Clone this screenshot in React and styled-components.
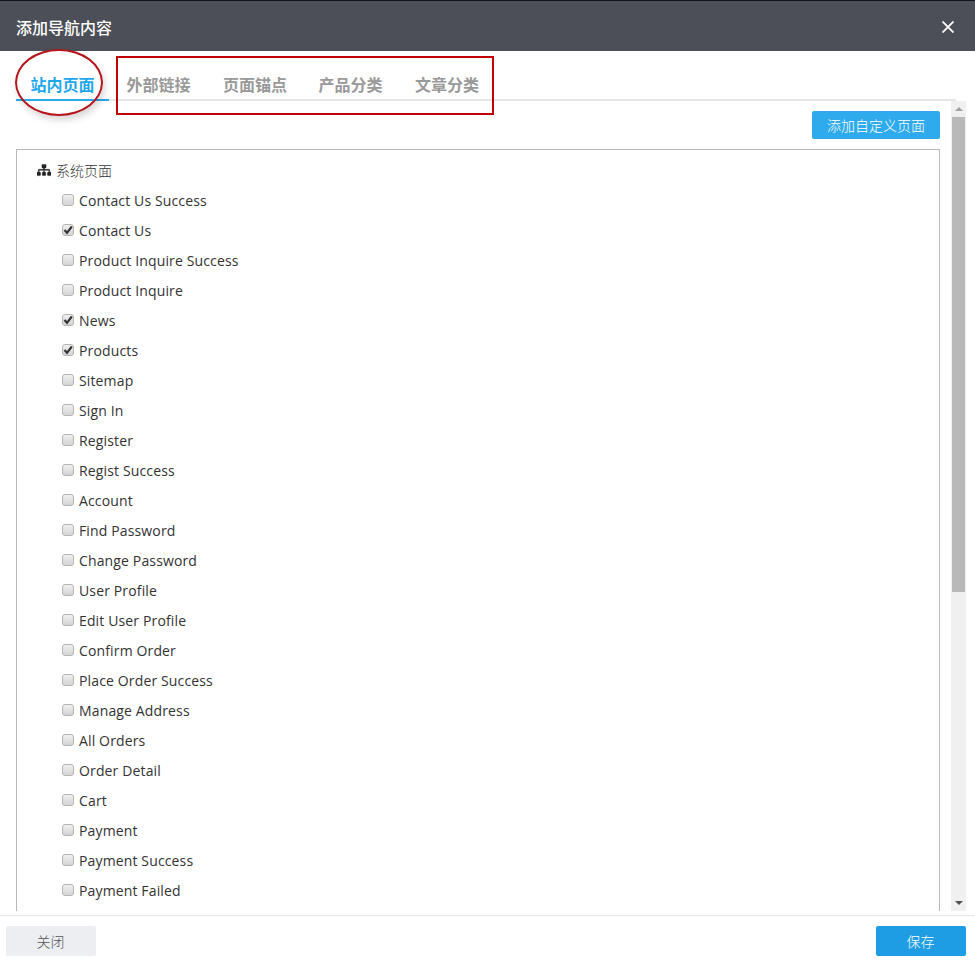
import React from 'react';
import styled, { createGlobalStyle } from 'styled-components';
import { FaSitemap } from 'react-icons/fa';

const GlobalStyle = createGlobalStyle`
    html, body {
        margin: 0;
        padding: 0;
        background: #fff;
    }

    body {
        font-family: "Open Sans", "Noto Sans CJK SC", sans-serif;
    }
`;

const Dialog = styled.div`
    position: relative;
    display: flex;
    flex-direction: column;
    width: 975px;
    height: 965px;
    overflow: hidden;
    background: #fff;
`;

const Header = styled.div`
    display: flex;
    align-items: center;
    justify-content: space-between;
    box-sizing: border-box;
    height: 51px;
    padding: 2px 21px 0 16px;
    background: #4c4f57;
    border-top: 1px solid #15161a;
`;

const Title = styled.div`
    color: #fff;
    font-family: "Noto Sans CJK SC", sans-serif;
    font-size: 16px;
    font-weight: 500;
`;

const CloseIcon = styled.svg`
    display: block;
    width: 12px;
    height: 12px;
    stroke: #fff;
    stroke-width: 1.8;
`;

const Tabs = styled.div`
    display: flex;
    box-sizing: border-box;
    height: 50px;
    margin: 0 19px 0 16px;
    border-bottom: 2px solid #e6e6e6;
`;

const Tab = styled.div`
    box-sizing: border-box;
    width: ${(p) => p.$width}px;
    height: 50px;
    padding-top: 22px;
    border-bottom: 2px solid ${(p) => (p.$active ? '#2aabe9' : 'transparent')};
    color: ${(p) => (p.$active ? '#1ea7ec' : '#999')};
    font-family: "Noto Sans CJK SC", sans-serif;
    font-size: 16px;
    font-weight: 700;
    line-height: 22px;
    text-align: center;
`;

const Body = styled.div`
    display: flex;
    flex: 1;
    min-height: 0;
    padding-left: 16px;
`;

const Content = styled.div`
    flex: none;
    width: 924px;
    overflow: hidden;
`;

const ActionRow = styled.div`
    display: flex;
    justify-content: flex-end;
    padding: 10px 0;
`;

const AddButton = styled.button`
    width: 128px;
    height: 28px;
    padding: 0;
    border: 0;
    border-radius: 2px;
    background: #2fabed;
    color: #fff;
    font-family: "Noto Sans CJK SC", sans-serif;
    font-size: 14px;
    font-weight: 300;
`;

const TreeBox = styled.div`
    box-sizing: border-box;
    height: 900px;
    padding: 10px 20px;
    border: 1px solid #b9b9b9;
`;

const TreeTitle = styled.div`
    display: flex;
    align-items: center;
    gap: 5px;
    height: 20px;
    margin-bottom: 5px;
    color: #333;
    font-family: "Noto Sans CJK SC", sans-serif;
    font-size: 14px;
    font-weight: 300;

    svg {
        width: 14px;
        height: 14px;
        color: #222;
        stroke: #222;
        stroke-width: 20px;
    }
`;

const Row = styled.div`
    display: flex;
    align-items: center;
    gap: 5px;
    height: 30px;
    padding-left: 25px;
    color: #333;
    font-size: 14px;
    letter-spacing: 0.14px;
`;

const Check = styled.span`
    display: flex;
    align-items: center;
    justify-content: center;
    box-sizing: border-box;
    width: 12px;
    height: 12px;
    border: 1px solid #b4b4b4;
    border-radius: 3px;
    background: linear-gradient(#f0f0f0, #d4d4d4);

    svg {
        width: 10px;
        height: 10px;
        fill: none;
        stroke: #333;
        stroke-width: 2.2;
    }
`;

const Scrollbar = styled.div`
    display: flex;
    flex-direction: column;
    align-items: center;
    box-sizing: border-box;
    width: 15px;
    height: 810px;
    margin-left: 11px;
    background: #f0f0f0;
`;

const ArrowCell = styled.div`
    display: flex;
    align-items: center;
    justify-content: center;
    width: 100%;
    height: 16px;
    margin-top: ${(p) => (p.$end ? 'auto' : '0')};
`;

const Arrow = styled.span`
    width: 0;
    height: 0;
    border-left: 4px solid transparent;
    border-right: 4px solid transparent;
    ${(p) => (p.$down ? 'border-top: 4px solid #505050;' : 'border-bottom: 4px solid #a3a3a3;')}
`;

const Thumb = styled.div`
    width: 13px;
    height: 475px;
    background: #b9b9b9;
`;

const Footer = styled.div`
    display: flex;
    justify-content: space-between;
    box-sizing: border-box;
    height: 50px;
    margin-top: 4px;
    padding: 10px 9px 0 6px;
    border-top: 1px solid #e6e6e6;
`;

const FooterButton = styled.button`
    width: 90px;
    height: 30px;
    padding: 0 1px 0 0;
    border: 0;
    border-radius: 2px;
    background: ${(p) => (p.$primary ? '#1e9de4' : '#eceef2')};
    color: ${(p) => (p.$primary ? '#fff' : '#555')};
    font-family: "Noto Sans CJK SC", sans-serif;
    font-size: 14px;
    font-weight: 300;
`;

// red markup someone drew on top of the screenshot
const MarkRect = styled.div`
    position: absolute;
    left: 116px;
    top: 56px;
    width: 378px;
    height: 59px;
    box-sizing: border-box;
    border: 2px solid #c00000;
`;

const MarkEllipse = styled.div`
    position: absolute;
    left: 15px;
    top: 49px;
    width: 88px;
    height: 67px;
    box-sizing: border-box;
    border: 2px solid #b5151b;
    border-radius: 50%;
    box-shadow: 2px 4px 7px rgba(0, 0, 0, 0.16);
`;

const tabs = [
    { label: '站内页面', width: 93, active: true },
    { label: '外部链接', width: 99 },
    { label: '页面锚点', width: 94 },
    { label: '产品分类', width: 97 },
    { label: '文章分类', width: 96 },
];

const pages = [
    { name: 'Contact Us Success' },
    { name: 'Contact Us', checked: true },
    { name: 'Product Inquire Success' },
    { name: 'Product Inquire' },
    { name: 'News', checked: true },
    { name: 'Products', checked: true },
    { name: 'Sitemap' },
    { name: 'Sign In' },
    { name: 'Register' },
    { name: 'Regist Success' },
    { name: 'Account' },
    { name: 'Find Password' },
    { name: 'Change Password' },
    { name: 'User Profile' },
    { name: 'Edit User Profile' },
    { name: 'Confirm Order' },
    { name: 'Place Order Success' },
    { name: 'Manage Address' },
    { name: 'All Orders' },
    { name: 'Order Detail' },
    { name: 'Cart' },
    { name: 'Payment' },
    { name: 'Payment Success' },
    { name: 'Payment Failed' },
];

export default function App() {
    return (
        <Dialog>
            <GlobalStyle />
            <Header>
                <Title>添加导航内容</Title>
                <CloseIcon viewBox="0 0 12 12">
                    <path d="M0.5 0.5 L11.5 11.5 M11.5 0.5 L0.5 11.5" />
                </CloseIcon>
            </Header>
            <Tabs>
                {tabs.map((t) => (
                    <Tab key={t.label} $width={t.width} $active={t.active}>
                        {t.label}
                    </Tab>
                ))}
            </Tabs>
            <Body>
                <Content>
                    <ActionRow>
                        <AddButton>添加自定义页面</AddButton>
                    </ActionRow>
                    <TreeBox>
                        <TreeTitle>
                            <FaSitemap />
                            系统页面
                        </TreeTitle>
                        {pages.map((p) => (
                            <Row key={p.name}>
                                <Check>
                                    {p.checked && (
                                        <svg viewBox="0 0 10 10">
                                            <path d="M1.5 5 L4 7.8 L8.8 1.5" />
                                        </svg>
                                    )}
                                </Check>
                                {p.name}
                            </Row>
                        ))}
                    </TreeBox>
                </Content>
                <Scrollbar>
                    <ArrowCell>
                        <Arrow />
                    </ArrowCell>
                    <Thumb />
                    <ArrowCell $end>
                        <Arrow $down />
                    </ArrowCell>
                </Scrollbar>
            </Body>
            <Footer>
                <FooterButton>关闭</FooterButton>
                <FooterButton $primary>保存</FooterButton>
            </Footer>
            <MarkRect />
            <MarkEllipse />
        </Dialog>
    );
}
